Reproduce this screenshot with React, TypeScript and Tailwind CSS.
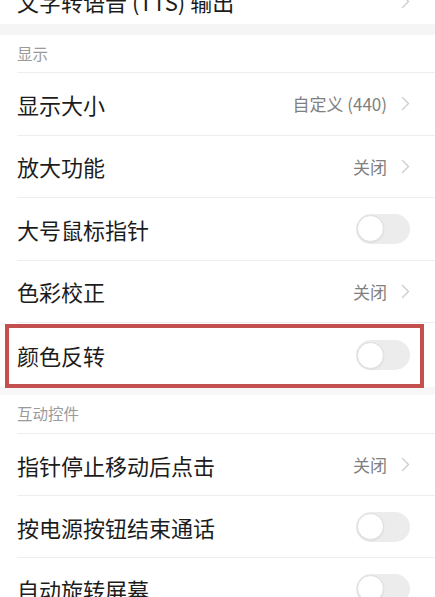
import React from 'react';

type Row =
  | { kind: 'value'; label: string; value: string }
  | { kind: 'toggle'; label: string; highlight?: boolean };

const displayRows: Row[] = [
  { kind: 'value', label: '显示大小', value: '自定义 (440)' },
  { kind: 'value', label: '放大功能', value: '关闭' },
  { kind: 'toggle', label: '大号鼠标指针' },
  { kind: 'value', label: '色彩校正', value: '关闭' },
];

const interactRows: Row[] = [
  { kind: 'value', label: '指针停止移动后点击', value: '关闭' },
  { kind: 'toggle', label: '按电源按钮结束通话' },
  { kind: 'toggle', label: '自动旋转屏幕' },
];

function Chevron() {
  return (
    <svg width="9" height="15" viewBox="0 0 9 15" fill="none" className="shrink-0">
      <path d="M1.5 1.5 L7.5 7.5 L1.5 13.5" stroke="#cccccc" strokeWidth="1.3" strokeLinecap="round" strokeLinejoin="round" />
    </svg>
  );
}

function Toggle() {
  return (
    <div className="w-[54px] h-[30px] rounded-full bg-[#ececec] flex items-center px-[1px]">
      <div className="w-[27px] h-[27px] rounded-full bg-white border border-[#dddddd] shadow-[0_1px_2px_rgba(0,0,0,0.06)]" />
    </div>
  );
}

function SettingRow({ row, divider = true, height = 'h-[62.5px]' }: { row: Row; divider?: boolean; height?: string }) {
  return (
    <div className="relative pl-[17px]">
      <div className={`${height} flex items-center justify-between pr-[25px] ${divider ? 'border-b border-[#eeeeee]' : ''}`}>
        <span className="text-[22px] text-[#1c1c1c] leading-none">{row.label}</span>
        {row.kind === 'value' ? (
          <div className="flex items-center gap-[14px]">
            <span className="text-[17px] text-[#808080] leading-none">{row.value}</span>
            <Chevron />
          </div>
        ) : (
          <Toggle />
        )}
      </div>
      {row.kind === 'toggle' && row.highlight && (
        <div className="absolute left-[5px] top-[1px] w-[419px] h-[64px] border-[4px] border-[#c3504e] pointer-events-none" />
      )}
    </div>
  );
}

function SectionHeader({ title, height }: { title: string; height: string }) {
  return (
    <div className="pl-[17px]">
      <div className={`${height} flex items-center border-b border-[#eeeeee]`}>
        <span className="text-[15.5px] text-[#9a9a9a] leading-none">{title}</span>
      </div>
    </div>
  );
}

export default function App() {
  return (
    <div
      className="w-[435px] h-[597px] overflow-hidden bg-white"
      style={{ fontFamily: '"Noto Sans CJK SC", "Noto Sans", sans-serif' }}
    >
      {/* row cut off at the top */}
      <div className="mt-[-22px] h-[46px] pl-[17px] pr-[25px] flex items-center justify-between">
        <span className="text-[22px] text-[#1c1c1c] leading-none">文字转语音 (TTS) 输出</span>
        <Chevron />
      </div>
      <div className="h-[11px] bg-[#f5f5f5]" />

      <SectionHeader title="显示" height="h-[38px]" />
      {displayRows.map((r) => (
        <SettingRow key={r.label} row={r} />
      ))}
      <SettingRow row={{ kind: 'toggle', label: '颜色反转', highlight: true }} divider={false} height="h-[64px]" />

      <div className="h-[8px] bg-[#f7f7f7]" />
      <SectionHeader title="互动控件" height="h-[39px]" />
      {interactRows.map((r) => (
        <SettingRow key={r.label} row={r} height="h-[62px]" />
      ))}
    </div>
  );
}
